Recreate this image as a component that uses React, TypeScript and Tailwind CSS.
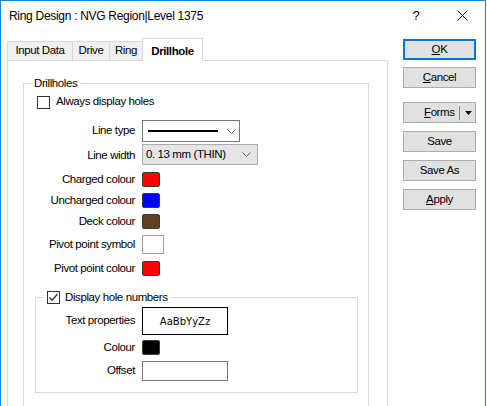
import React from "react";

const ui = "[font-family:'Liberation_Sans',Arial,sans-serif] text-[11.5px] tracking-[-0.4px] text-black";

const Chevron = ({ className }: { className: string }) => (
  <svg width="9" height="5" viewBox="0 0 9 5" className={className}>
    <path d="M0.5 0.5 L4.5 4.5 L8.5 0.5" fill="none" stroke="#606060" strokeWidth="1" />
  </svg>
);

const Check = () => (
  <svg width="11" height="11" viewBox="0 0 11 11">
    <path d="M1.5 5.5 L4.2 8.2 L9.5 2" fill="none" stroke="#333" strokeWidth="1.3" />
  </svg>
);

function Btn({ children, primary }: { children: React.ReactNode; primary?: boolean }) {
  return (
    <div
      className={
        primary
          ? "flex h-[21px] w-[73px] items-center justify-center border-2 border-[#0078d7] bg-[#e1e1e1]"
          : "flex h-[21px] w-[73px] items-center justify-center border border-[#adadad] bg-[#e1e1e1]"
      }
    >
      {children}
    </div>
  );
}

export default function App() {
  return (
    <div className={`h-[406px] w-[487px] overflow-hidden bg-white ${ui}`}>
      <div className="h-[420px] w-[486px] border-l border-r border-t border-[#1883d7]">
        {/* title bar */}
        <div className="flex h-[29px] shrink-0 items-center justify-between">
          <span className="pl-[8px] text-[12px] tracking-[-0.3px]">Ring Design : NVG Region|Level 1375</span>
          <div className="flex h-full">
            <div className="flex w-[46px] items-center justify-center text-[13px]">?</div>
            <div className="flex w-[46px] items-center justify-center">
              <svg width="11" height="11" viewBox="0 0 11 11">
                <path d="M0.5 0.5 L10.5 10.5 M10.5 0.5 L0.5 10.5" stroke="#111" strokeWidth="1" />
              </svg>
            </div>
          </div>
        </div>

        <div className="flex pt-[8px]">
          {/* tabs + page */}
          <div className="ml-[6px] flex w-[381px] flex-col">
            <div className="flex h-[22px] items-end">
              <div className="flex h-[19px] w-[65px] items-center justify-center border-l border-t border-[#d9d9d9] bg-[#f0f0f0]">Input Data</div>
              <div className="flex h-[19px] w-[37px] items-center justify-center border-l border-t border-[#d9d9d9] bg-[#f0f0f0]">Drive</div>
              <div className="flex h-[19px] w-[33px] items-center justify-center border-l border-t border-[#d9d9d9] bg-[#f0f0f0]">Ring</div>
              <div className="relative z-10 -mb-px flex h-[23px] w-[61px] items-start justify-center border-l border-r border-t border-[#d9d9d9] bg-white pt-[4px] font-bold">Drillhole</div>
            </div>

            <div className="h-[400px] border border-[#d9d9d9] pl-[15px] pt-[15px]">
              <fieldset className="w-[346px] border border-[#dcdcdc] pb-[40px]">
                <legend className="ml-[7px] px-[3px] leading-[15px]">Drillholes</legend>

                <div className="ml-[13px] mt-[4px] flex h-[14px] items-center gap-[6px]">
                  <div className="h-[13px] w-[13px] border border-[#333] bg-white" />
                  <span>Always display holes</span>
                </div>

                {/* line type */}
                <div className="mt-[11px] flex h-[22px] items-center">
                  <span className="w-[111px] text-right">Line type</span>
                  <div className="ml-[7px] flex h-[22px] w-[98px] items-center border border-[#7a7a7a] bg-white pl-[5px]">
                    <div className="h-[2px] w-[70px] bg-black" />
                    <Chevron className="ml-[9px]" />
                  </div>
                </div>

                <div className="mt-[2px] flex h-[21px] items-center">
                  <span className="w-[111px] pt-[3px] text-right">Line width</span>
                  <div className="ml-[7px] flex h-[21px] w-[116px] items-center justify-between border border-[#acacac] bg-[#e5e5e5] pl-[3px] pr-[6px]">
                    <span>0. 13 mm (THIN)</span>
                    <Chevron className="" />
                  </div>
                </div>

                <div className="mt-[7px] flex h-[15px] items-center">
                  <span className="w-[111px] text-right">Charged colour</span>
                  <div className="ml-[7px] h-[15px] w-[18px] rounded-[2px] border border-[#3a3a3a] bg-[#ff0000]" />
                </div>

                <div className="mt-[6px] flex h-[15px] items-center">
                  <span className="w-[111px] text-right">Uncharged colour</span>
                  <div className="ml-[7px] h-[15px] w-[18px] rounded-[2px] border border-[#3a3a3a] bg-[#0000ff]" />
                </div>

                <div className="mt-[6px] flex h-[15px] items-center">
                  <span className="w-[111px] text-right">Deck colour</span>
                  <div className="ml-[7px] h-[15px] w-[18px] rounded-[2px] border border-[#3a3a3a] bg-[#604020]" />
                </div>

                <div className="mt-[6px] flex h-[19px] items-center">
                  <span className="w-[111px] text-right">Pivot point symbol</span>
                  <div className="ml-[7px] h-[19px] w-[22px] border border-[#a0a0a0] bg-white" />
                </div>

                <div className="mt-[7px] flex h-[15px] items-center">
                  <span className="w-[111px] text-right">Pivot point colour</span>
                  <div className="ml-[7px] h-[15px] w-[18px] rounded-[2px] border border-[#3a3a3a] bg-[#ff0000]" />
                </div>

                <fieldset className="ml-[11px] mt-[14px] w-[323px] border border-[#dcdcdc] pb-[11px]">
                  <legend className="ml-[9px] flex items-center gap-[5px] px-[2px] leading-[15px]">
                    <span className="flex h-[13px] w-[13px] items-center justify-center border border-[#333] bg-white">
                      <Check />
                    </span>
                    <span>Display hole numbers</span>
                  </legend>

                  <div className="mt-[2px] flex h-[28px] items-center">
                    <span className="w-[99px] text-right">Text properties</span>
                    <div className="ml-[7px] flex h-[28px] w-[86px] items-center justify-center border border-black bg-white [font-family:'DejaVu_Sans',sans-serif] text-[10px] tracking-[0px]">
                      AaBbYyZz
                    </div>
                  </div>

                  <div className="mt-[5px] flex h-[15px] items-center">
                    <span className="w-[99px] text-right">Colour</span>
                    <div className="ml-[7px] h-[15px] w-[18px] rounded-[2px] border border-[#3a3a3a] bg-black" />
                  </div>

                  <div className="mt-[6px] flex h-[20px] items-center">
                    <span className="w-[99px] text-right">Offset</span>
                    <div className="ml-[7px] h-[20px] w-[86px] border border-[#7a7a7a] bg-white" />
                  </div>
                </fieldset>
              </fieldset>
            </div>
          </div>

          {/* buttons */}
          <div className="ml-[15px] mt-[1px] flex flex-col">
            <Btn primary>
              <span><u>O</u>K</span>
            </Btn>
            <div className="mt-[7px]">
              <Btn>
                <span><u>C</u>ancel</span>
              </Btn>
            </div>
            <div className="mt-[14px]">
              <div className="flex h-[21px] w-[73px] items-center border border-[#adadad] bg-[#e1e1e1]">
                <span className="ml-[20px] w-[34px]"><u>F</u>orms</span>
                <div className="ml-[1px] h-[14px] w-px bg-[#8a8a8a]" />
                <svg width="7" height="4" viewBox="0 0 7 4" className="ml-[5px]">
                  <path d="M0 0 L7 0 L3.5 4 Z" fill="#111" />
                </svg>
              </div>
            </div>
            <div className="mt-[8px]">
              <Btn>Save</Btn>
            </div>
            <div className="mt-[8px]">
              <Btn>Save As</Btn>
            </div>
            <div className="mt-[8px]">
              <Btn>
                <span><u>A</u>pply</span>
              </Btn>
            </div>
          </div>
        </div>
      </div>
    </div>
  );
}
